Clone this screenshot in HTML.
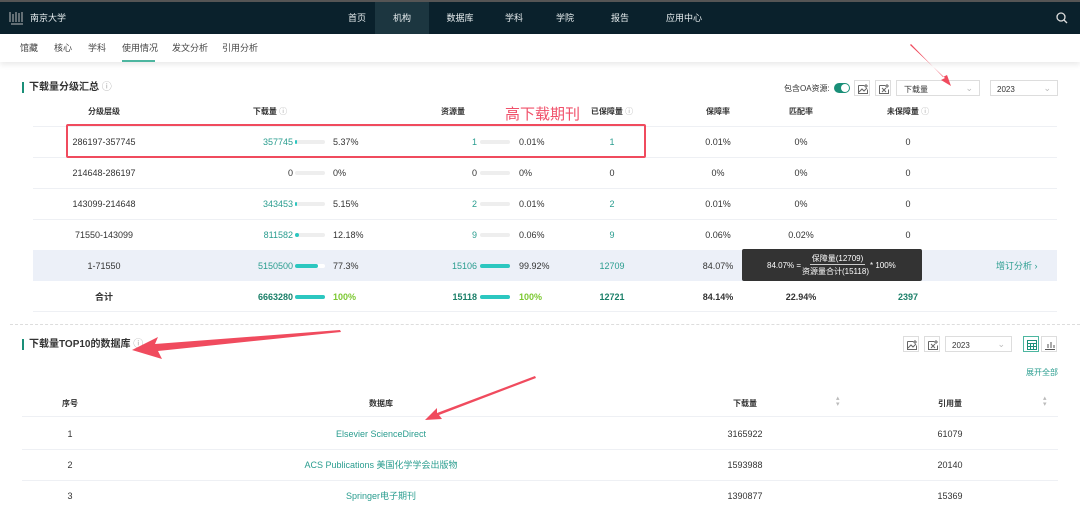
<!DOCTYPE html>
<html><head><meta charset="utf-8"><style>
*{margin:0;padding:0;box-sizing:border-box}
body{width:1080px;height:507px;overflow:hidden;background:#fff;font-family:"Liberation Sans","Noto Sans CJK SC",sans-serif;font-size:9px;line-height:11px;color:#333;position:relative}
.a{position:absolute;white-space:nowrap}
.nav{position:absolute;left:0;top:0;width:1080px;height:34px;background:#0a212c;border-top:2px solid #555}
.nav .a{color:#e8eef0;font-size:9px;top:11px}
.sub{position:absolute;left:0;top:34px;width:1080px;height:28px;background:#fff;box-shadow:0 3px 5px rgba(0,0,0,.08)}
.sub .a{top:9px;font-size:9px;color:#444}
.c{transform:translateX(-50%)}
.r{transform:translateX(-100%)}
.g{color:#2a9d8f}
.hd{font-weight:bold;color:#333}
.bar{position:absolute;width:30px;height:4px;border-radius:2px;background:#eee}
.bar i{position:absolute;left:0;top:0;height:4px;border-radius:2px;background:#2cc7c0}
.line{position:absolute;left:22px;width:1036px;height:1px;background:#eef0f4}
.box{position:absolute;border:1px solid #ddd;background:#fff;height:16px}
.ic{position:absolute;width:16px;height:16px;border:1px solid #ddd;background:#fff}
.ic svg{position:absolute;left:3px;top:3px}
</style></head><body>
<div class="nav">
 <svg class="a" style="left:8px;top:8px" width="18" height="16"><g stroke="#bbb" stroke-width="1"><path d="M2 2v10M5 4v8M8 2v10M11 3v9M14 2v10"/><path d="M3 14h12"/></g></svg>
 <div class="a" style="left:30px;top:11px">南京大学</div>
 <div class="a" style="left:375px;top:0;width:54px;height:32px;background:#1c3640"></div>
 <div class="a c" style="left:357px">首页</div>
 <div class="a c" style="left:402px">机构</div>
 <div class="a c" style="left:460px">数据库</div>
 <div class="a c" style="left:514px">学科</div>
 <div class="a c" style="left:565px">学院</div>
 <div class="a c" style="left:620px">报告</div>
 <div class="a c" style="left:684px">应用中心</div>
 <svg class="a" style="left:1056px;top:10px" width="12" height="12"><circle cx="5" cy="5" r="4" stroke="#ddd" fill="none" stroke-width="1.3"/><path d="M8 8l3 3" stroke="#ddd" stroke-width="1.3"/></svg>
</div>
<div class="sub">
 <div class="a" style="left:20px">馆藏</div>
 <div class="a" style="left:54px">核心</div>
 <div class="a" style="left:88px">学科</div>
 <div class="a g" style="left:122px">使用情况</div>
 <div class="a" style="left:122px;top:26px;width:33px;height:2px;background:#4db6a0"></div>
 <div class="a" style="left:172px">发文分析</div>
 <div class="a" style="left:222px">引用分析</div>
</div>

<div class="a" style="left:22px;top:82px;width:2px;height:11px;background:#1a8f78"></div>
<div class="a hd" style="left:29px;top:82px;font-size:10px">下载量分级汇总 <span style="color:#aaa;font-weight:normal">ⓘ</span></div>
<div class="a" style="left:784px;top:83px;font-size:8px">包含OA资源:</div>
<div class="a" style="left:834px;top:83px;width:16px;height:10px;border-radius:5px;background:#1a8f78"><div class="a" style="left:7px;top:1px;width:8px;height:8px;border-radius:4px;background:#fff"></div></div>
<div class="ic" style="left:854px;top:80px"><svg width="10" height="10"><path d="M0.5 1.5h6M0.5 1.5v8h9v-4M1 8l3-3 2 2 3-3M8 0v4M6 2h4" stroke="#666" fill="none" stroke-width="1"/></svg></div>
<div class="ic" style="left:875px;top:80px"><svg width="10" height="10"><path d="M0.5 1.5h6M0.5 1.5v8h9v-4M3 4l4 4M7 4l-4 4M8 0v4M6 2h4" stroke="#666" fill="none" stroke-width="1"/></svg></div>
<div class="box" style="left:896px;top:80px;width:84px"><span class="a" style="left:7px;top:3px;font-size:8px">下载量</span><span class="a" style="right:6px;top:2px;color:#bbb">⌄</span></div>
<div class="box" style="left:990px;top:80px;width:68px"><span class="a" style="left:6px;top:3px;font-size:8px">2023</span><span class="a" style="right:6px;top:2px;color:#bbb">⌄</span></div>

<div class="a hd c" style="left:104px;top:106px;font-size:8px">分级层级</div>
<div class="a hd c" style="left:270px;top:106px;font-size:8px">下载量 <span style="color:#aaa;font-weight:normal">ⓘ</span></div>
<div class="a hd c" style="left:453px;top:106px;font-size:8px">资源量</div>
<div class="a hd c" style="left:612px;top:106px;font-size:8px">已保障量 <span style="color:#aaa;font-weight:normal">ⓘ</span></div>
<div class="a hd c" style="left:718px;top:106px;font-size:8px">保障率</div>
<div class="a hd c" style="left:801px;top:106px;font-size:8px">匹配率</div>
<div class="a hd c" style="left:908px;top:106px;font-size:8px">未保障量 <span style="color:#aaa;font-weight:normal">ⓘ</span></div>
<div class="line" style="top:126px;left:33px;width:1024px"></div>

<div class="a" style="left:33px;top:250px;width:1024px;height:31px;background:#ecf0f8"></div>

<div class="a c" style="left:104px;top:137px">286197-357745</div><div class="a r g" style="left:293px;top:137px">357745</div><div class="bar" style="left:295px;top:140px"><i style="width:2px"></i></div><div class="a" style="left:333px;top:137px">5.37%</div><div class="a r g" style="left:477px;top:137px">1</div><div class="bar" style="left:480px;top:140px"></div><div class="a" style="left:519px;top:137px">0.01%</div><div class="a c g" style="left:612px;top:137px">1</div><div class="a c" style="left:718px;top:137px">0.01%</div><div class="a c" style="left:801px;top:137px">0%</div><div class="a c" style="left:908px;top:137px">0</div>
<div class="line" style="top:157px;left:33px;width:1024px"></div>
<div class="a c" style="left:104px;top:168px">214648-286197</div><div class="a r" style="left:293px;top:168px">0</div><div class="bar" style="left:295px;top:171px"></div><div class="a" style="left:333px;top:168px">0%</div><div class="a r" style="left:477px;top:168px">0</div><div class="bar" style="left:480px;top:171px"></div><div class="a" style="left:519px;top:168px">0%</div><div class="a c" style="left:612px;top:168px">0</div><div class="a c" style="left:718px;top:168px">0%</div><div class="a c" style="left:801px;top:168px">0%</div><div class="a c" style="left:908px;top:168px">0</div>
<div class="line" style="top:188px;left:33px;width:1024px"></div>
<div class="a c" style="left:104px;top:199px">143099-214648</div><div class="a r g" style="left:293px;top:199px">343453</div><div class="bar" style="left:295px;top:202px"><i style="width:2px"></i></div><div class="a" style="left:333px;top:199px">5.15%</div><div class="a r g" style="left:477px;top:199px">2</div><div class="bar" style="left:480px;top:202px"></div><div class="a" style="left:519px;top:199px">0.01%</div><div class="a c g" style="left:612px;top:199px">2</div><div class="a c" style="left:718px;top:199px">0.01%</div><div class="a c" style="left:801px;top:199px">0%</div><div class="a c" style="left:908px;top:199px">0</div>
<div class="line" style="top:219px;left:33px;width:1024px"></div>
<div class="a c" style="left:104px;top:230px">71550-143099</div><div class="a r g" style="left:293px;top:230px">811582</div><div class="bar" style="left:295px;top:233px"><i style="width:4px"></i></div><div class="a" style="left:333px;top:230px">12.18%</div><div class="a r g" style="left:477px;top:230px">9</div><div class="bar" style="left:480px;top:233px"></div><div class="a" style="left:519px;top:230px">0.06%</div><div class="a c g" style="left:612px;top:230px">9</div><div class="a c" style="left:718px;top:230px">0.06%</div><div class="a c" style="left:801px;top:230px">0.02%</div><div class="a c" style="left:908px;top:230px">0</div>
<div class="a c" style="left:104px;top:261px">1-71550</div><div class="a r g" style="left:293px;top:261px">5150500</div><div class="bar" style="left:295px;top:264px;background:#fff"><i style="width:23px"></i></div><div class="a" style="left:333px;top:261px">77.3%</div><div class="a r g" style="left:477px;top:261px">15106</div><div class="bar" style="left:480px;top:264px"><i style="width:30px"></i></div><div class="a" style="left:519px;top:261px">99.92%</div><div class="a c g" style="left:612px;top:261px">12709</div><div class="a c" style="left:718px;top:261px">84.07%</div><div class="a g" style="left:996px;top:261px">增订分析 ›</div>
<div class="a c hd" style="left:104px;top:292px">合计</div><div class="a r hd" style="left:293px;top:292px;color:#1a7f68">6663280</div><div class="bar" style="left:295px;top:295px"><i style="width:30px"></i></div><div class="a hd" style="left:333px;top:292px;color:#7cc832">100%</div><div class="a r hd" style="left:477px;top:292px;color:#1a7f68">15118</div><div class="bar" style="left:480px;top:295px"><i style="width:30px"></i></div><div class="a hd" style="left:519px;top:292px;color:#7cc832">100%</div><div class="a c hd" style="left:612px;top:292px;color:#1a7f68">12721</div><div class="a c hd" style="left:718px;top:292px">84.14%</div><div class="a c hd" style="left:801px;top:292px">22.94%</div><div class="a c hd" style="left:908px;top:292px;color:#1a7f68">2397</div>
<div class="line" style="top:311px;left:33px;width:1024px"></div>

<div class="a" style="left:742px;top:249px;width:180px;height:32px;background:#333;border-radius:2px;color:#fff;font-size:8px">
 <div class="a" style="left:25px;top:11px">84.07% =</div>
 <div class="a" style="left:68px;top:4px;width:55px;text-align:center;border-bottom:1px solid #ccc">保障量(12709)</div>
 <div class="a" style="left:60px;top:17px">资源量合计(15118)</div>
 <div class="a" style="left:128px;top:11px">* 100%</div>
</div>

<div class="a" style="left:10px;top:324px;width:1070px;border-top:1px dashed #ddd"></div>

<div class="a" style="left:22px;top:339px;width:2px;height:11px;background:#1a8f78"></div>
<div class="a hd" style="left:29px;top:339px;font-size:10px">下载量TOP10的数据库 <span style="color:#aaa;font-weight:normal">ⓘ</span></div>
<div class="ic" style="left:903px;top:336px"><svg width="10" height="10"><path d="M0.5 1.5h6M0.5 1.5v8h9v-4M1 8l3-3 2 2 3-3M8 0v4M6 2h4" stroke="#666" fill="none" stroke-width="1"/></svg></div>
<div class="ic" style="left:924px;top:336px"><svg width="10" height="10"><path d="M0.5 1.5h6M0.5 1.5v8h9v-4M3 4l4 4M7 4l-4 4M8 0v4M6 2h4" stroke="#666" fill="none" stroke-width="1"/></svg></div>
<div class="box" style="left:945px;top:336px;width:67px"><span class="a" style="left:6px;top:3px;font-size:8px">2023</span><span class="a" style="right:6px;top:2px;color:#bbb">⌄</span></div>
<div class="ic" style="left:1023px;top:336px;border-color:#4db6a0"><svg width="10" height="10"><path d="M0.5 0.5h9v9h-9zM0.5 3.5h9M0.5 6.5h9M3.5 3.5v6M6.5 3.5v6" stroke="#1a8f78" fill="none" stroke-width="1"/></svg></div>
<div class="ic" style="left:1041px;top:336px"><svg width="10" height="10"><path d="M0 9.5h10M3 8V4M6 8V2M9 8V5" stroke="#555" stroke-width="1"/></svg></div>
<div class="a g" style="left:1026px;top:367px;font-size:8px">展开全部</div>

<div class="a" style="left:22px;top:389px;width:1036px;height:28px;border-bottom:1px solid #eef0f4"></div>
<div class="a c hd" style="left:70px;top:398px;font-size:8px">序号</div>
<div class="a c hd" style="left:381px;top:398px;font-size:8px">数据库</div>
<div class="a c hd" style="left:745px;top:398px;font-size:8px">下载量</div>
<div class="a c hd" style="left:950px;top:398px;font-size:8px">引用量</div>
<div class="a" style="left:836px;top:396px;color:#bbb;font-size:7px;line-height:6px">▴<br>▾</div>
<div class="a" style="left:1043px;top:396px;color:#bbb;font-size:7px;line-height:6px">▴<br>▾</div>
<div class="a c" style="left:70px;top:429px">1</div><div class="a c g" style="left:381px;top:429px">Elsevier ScienceDirect</div><div class="a c" style="left:745px;top:429px">3165922</div><div class="a c" style="left:950px;top:429px">61079</div>
<div class="line" style="top:449px"></div>
<div class="a c" style="left:70px;top:460px">2</div><div class="a c g" style="left:381px;top:460px">ACS Publications 美国化学学会出版物</div><div class="a c" style="left:745px;top:460px">1593988</div><div class="a c" style="left:950px;top:460px">20140</div>
<div class="line" style="top:480px"></div>
<div class="a c" style="left:70px;top:491px">3</div><div class="a c g" style="left:381px;top:491px">Springer电子期刊</div><div class="a c" style="left:745px;top:491px">1390877</div><div class="a c" style="left:950px;top:491px">15369</div>

<div class="a" style="left:66px;top:124px;width:580px;height:34px;border:2px solid #f04b5e;border-radius:2px"></div>
<div class="a" style="left:505px;top:106px;font-size:15px;line-height:18px;color:#f0506a">高下载期刊</div>
<svg class="a" style="left:0;top:0" width="1080" height="507">
 <g fill="#f04b5e" stroke="none">
  <path d="M910 45L945 78L941 80L951 86L947 75L943 77L911 44Z"/>
  <path d="M340 330L155 344L158 337L132 350L162 359L158 351L341 332Z"/>
  <path d="M535 376L437 413L437 408L425 420L442 419L439 415L536 378Z"/>
 </g>
</svg>
</body></html>
